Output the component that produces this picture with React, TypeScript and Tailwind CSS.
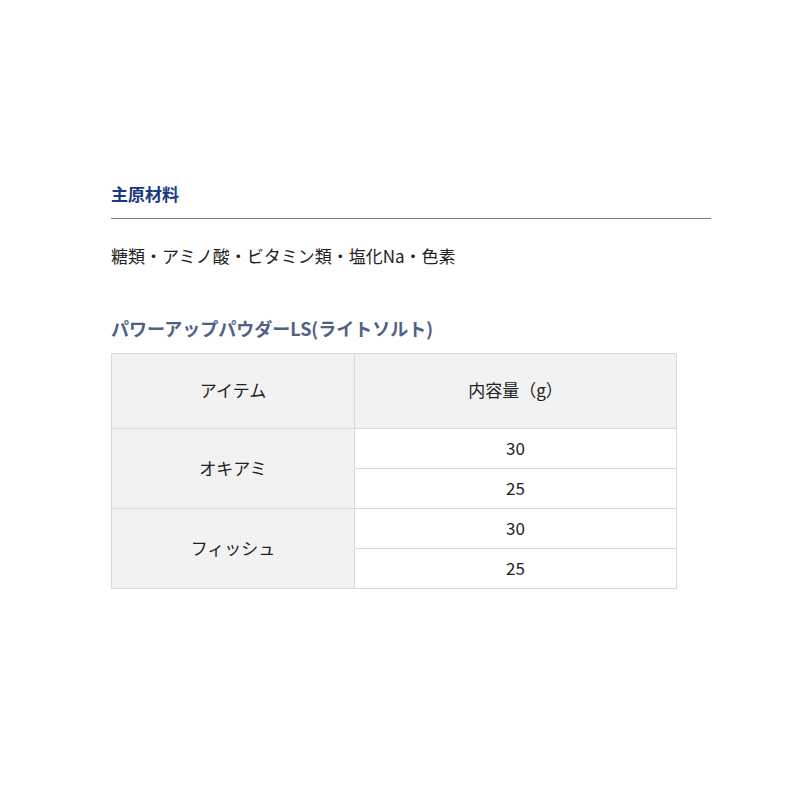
import React from "react";

const font = { fontFamily: '"Noto Sans CJK JP", "Noto Sans", sans-serif' };

export default function App() {
  const cell = "border border-[#d9d9d9] text-center text-[17px] leading-[24px] text-[#222] pb-[2px]";
  return (
    <div className="w-[800px] h-[800px] bg-white" style={font}>
      <div className="pt-[180px] pl-[111px] w-[711px]">
        <h2 className="text-[17px] leading-[28px] font-bold text-[#1b3b7d]">主原材料</h2>
        <div className="mt-[10px] h-px bg-[#7a7a7a]" />
        <p className="mt-[24px] text-[17px] leading-[26px] text-[#222]">糖類・アミノ酸・ビタミン類・塩化Na・色素</p>
        <h3 className="mt-[45px] text-[18px] leading-[28px] font-bold text-[#4f6282]">パワーアップパウダーLS(ライトソルト)</h3>
        <table className="mt-[11px] border-collapse w-[566px]">
          <tbody>
            <tr className="h-[75px] bg-[#f2f2f2]">
              <td className={`${cell} w-[243px]`}>アイテム</td>
              <td className={cell}>内容量（g）</td>
            </tr>
            <tr className="h-[40px]">
              <td rowSpan={2} className={`${cell} bg-[#f2f2f2]`}>オキアミ</td>
              <td className={cell}>30</td>
            </tr>
            <tr className="h-[40px]">
              <td className={cell}>25</td>
            </tr>
            <tr className="h-[40px]">
              <td rowSpan={2} className={`${cell} bg-[#f2f2f2]`}>フィッシュ</td>
              <td className={cell}>30</td>
            </tr>
            <tr className="h-[40px]">
              <td className={cell}>25</td>
            </tr>
          </tbody>
        </table>
      </div>
    </div>
  );
}
